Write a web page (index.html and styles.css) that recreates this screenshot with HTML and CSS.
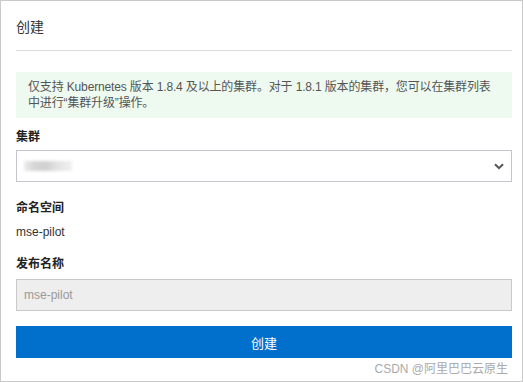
FILE: index.html
```html
<!DOCTYPE html>
<html lang="zh">
<head>
<meta charset="utf-8">
<link rel="stylesheet" href="styles.css">
</head>
<body>
<div class="frame">
  <div class="header">创建</div>
  <div class="alert">仅支持 Kubernetes 版本 1.8.4 及以上的集群。对于 1.8.1 版本的集群，您可以在集群列表中进行“集群升级”操作。</div>
  <div class="label label-first">集群</div>
  <div class="select">
    <span class="blurred"></span>
    <svg class="chevron" width="10" height="7" viewBox="0 0 10 7"><path d="M1 1.2 L5 5.2 L9 1.2" fill="none" stroke="#555" stroke-width="2"/></svg>
  </div>
  <div class="label label-ns">命名空间</div>
  <div class="value">mse-pilot</div>
  <div class="label label-rel">发布名称</div>
  <div class="input">mse-pilot</div>
  <button class="btn">创建</button>
  <div class="watermark">CSDN @阿里巴巴云原生</div>
</div>
</body>
</html>
```
FILE: styles.css
```css
html, body {
  margin: 0;
  padding: 0;
  background: #fff;
}
.frame {
  position: relative;
  box-sizing: border-box;
  width: 523px;
  height: 382px;
  border: 1px solid #c9c9c9;
  padding: 0 10px 0 15px;
  font-family: "Liberation Sans", "Noto Sans CJK SC", sans-serif;
  color: #333;
  font-size: 12px;
}
.header {
  padding-top: 16px;
  height: 20px;
  line-height: 20px;
  padding-bottom: 13px;
  border-bottom: 1px solid #dcdcdc;
  font-size: 14px;
  color: #333;
}
.alert {
  margin-top: 21px;
  background: #eefaf0;
  padding: 7px 12px;
  line-height: 16px;
  color: #555;
  letter-spacing: -0.15px;
}
.label {
  font-weight: bold;
  line-height: 18px;
  color: #222;
}
.label-first { margin-top: 10px; }
.label-ns { margin-top: 17px; }
.label-rel { margin-top: 14px; }
.select {
  margin-top: 4px;
  box-sizing: border-box;
  height: 32px;
  border: 1px solid #c4c6cc;
  display: flex;
  align-items: center;
  justify-content: space-between;
  padding: 0 7px 0 7px;
}
.blurred {
  display: block;
  width: 48px;
  height: 10px;
  background: linear-gradient(90deg, #ececec 0%, #d6d6d6 20%, #d0d0d0 45%, #e6e6e6 75%, #f0f0f0 100%);
  filter: blur(1.5px);
}
.chevron { display: block; }
.value {
  margin-top: 6px;
  line-height: 18px;
  color: #333;
}
.input {
  margin-top: 6px;
  box-sizing: border-box;
  height: 32px;
  border: 1px solid #c9c9c9;
  background: #efeeee;
  color: #999;
  line-height: 30px;
  padding: 0 7px;
}
.btn {
  display: block;
  margin-top: 15px;
  width: 100%;
  height: 32px;
  border: none;
  background: #0070cc;
  color: #fff;
  font-family: inherit;
  font-size: 13px;
  padding: 0;
}
.watermark {
  position: absolute;
  right: 14px;
  top: 359px;
  font-size: 12px;
  color: #aaa;
  line-height: 18px;
}
```
